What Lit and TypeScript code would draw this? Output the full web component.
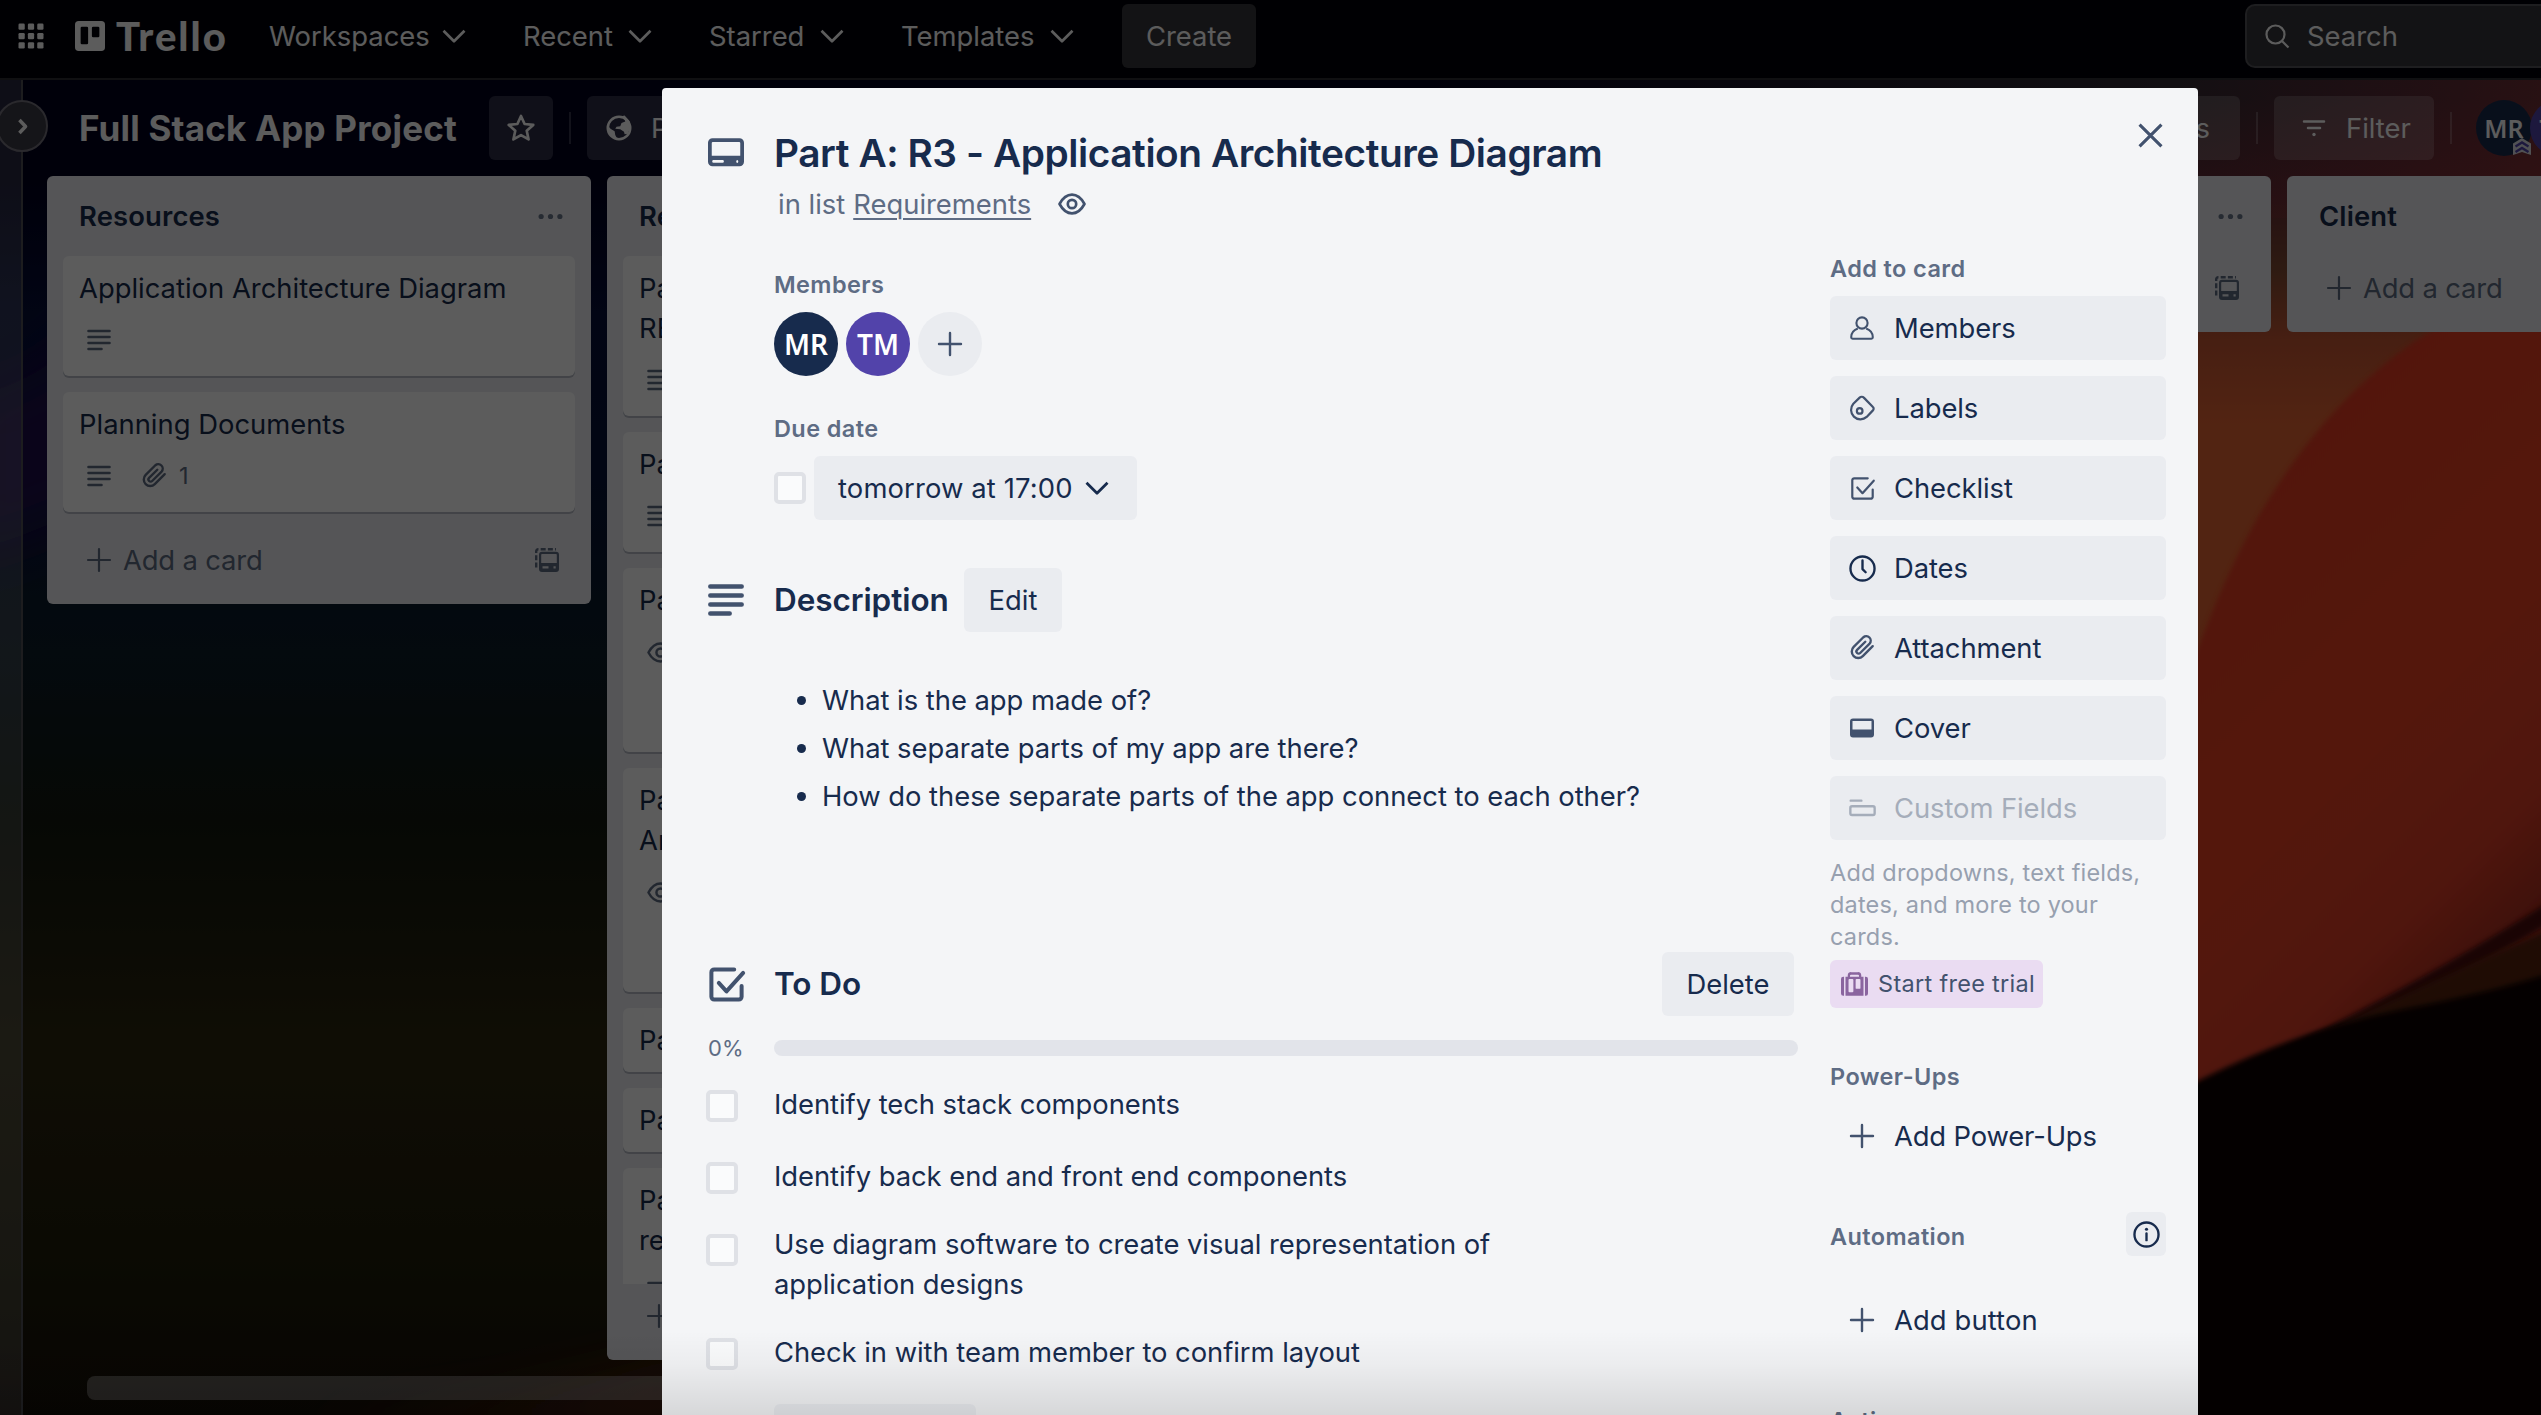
import { LitElement, html, svg, css, nothing } from "lit";
import { customElement, property } from "lit/decorators.js";

type IconName = string;

/** Icon artwork, all on a 24 x 24 grid. */
const ICONS: Record<IconName, unknown> = {
  apps: svg`${[2, 9.5, 17].map((y) => [2, 9.5, 17].map((x) => svg`<rect x=${x} y=${y} width="5" height="5" rx="1" fill="currentColor"/>`))}`,
  trello: svg`<path fill="currentColor" fill-rule="evenodd" d="M3 0h18a3 3 0 0 1 3 3v18a3 3 0 0 1-3 3H3a3 3 0 0 1-3-3V3a3 3 0 0 1 3-3Zm2.500 4.500a1 1 0 0 0-1 1v12a1 1 0 0 0 1 1h4a1 1 0 0 0 1-1v-12a1 1 0 0 0-1-1Zm9 0a1 1 0 0 0-1 1v6.500a1 1 0 0 0 1 1h4a1 1 0 0 0 1-1V5.500a1 1 0 0 0-1-1Z"/>`,
  chevron: svg`<path class="s" d="M3 7.500l9 9 9-9"/>`,
  expand: svg`<path class="s b" d="M8.500 4.500l7 7.500-7 7.500"/>`,
  star: svg`<path class="s" d="M12 3l2.700 6 6.500.7-4.900 4.400 1.400 6.500L12 17.300l-5.700 3.300 1.400-6.500-4.900-4.400 6.500-.7Z"/>`,
  globe: svg`<circle cx="12" cy="12" r="9" class="s"/><path fill="currentColor" d="M10 3.500l6 .3 1 3-3 1.200-1 2.500-3 .5-1 1.500 4 .5 3 2 .5 2 2.500-.5 2-5-.5-5-4-4.500ZM3.200 10l2 2.500 3.300 2 .5 3 1.800 3.500-4.500-2L3 14.500Z"/>`,
  search: svg`<circle cx="10.500" cy="10.500" r="9" class="s"/><path class="s" d="M17 17l6.500 6.500"/>`,
  filter: svg`<path class="s r" d="M2 5.500h20M6 12h12"/><circle cx="12" cy="18.500" r="1.700" fill="currentColor"/>`,
  dots: svg`<circle cx="3" cy="12" r="2.500" fill="currentColor"/><circle cx="12" cy="12" r="2.500" fill="currentColor"/><circle cx="21" cy="12" r="2.500" fill="currentColor"/>`,
  lines: svg`<path class="s r" d="M1.500 3h21M1.500 9h21M1.500 15h21M1.500 21h13"/>`,
  clip: svg`<g transform="translate(-1.800 -2.600) scale(1.140)"><path class="s r" d="M21.500 11.200l-8.700 8.700a5.600 5.600 0 0 1-8-8l8.500-8.500a3.900 3.900 0 0 1 5.500 5.500L10.500 17.200a1.900 1.900 0 0 1-2.700-2.700l7.200-7.200"/></g>`,
  plus: svg`<path class="s r" d="M12 1v22M1 12h22"/>`,
  template: svg`<path class="s" stroke-dasharray="5 2.200" stroke-width="2.400" d="M1.200 19.500V3.200A2 2 0 0 1 3.200 1.200H21"/><path fill="currentColor" fill-rule="evenodd" d="M7 3.800h14a3 3 0 0 1 3 3v14.200a3 3 0 0 1-3 3H7a3 3 0 0 1-3-3V6.800a3 3 0 0 1 3-3Zm0 2.200a.8.800 0 0 0-.8.800v8.200h15.600V6.800A.8.800 0 0 0 21 6Zm.500 12.300v2.200h6v-2.200Zm11 0v2.200h2.200v-2.200Z"/>`,
  eye: svg`<path class="s" d="M1.300 12C4 7 7.500 4 12 4s8 3 10.700 8C20 17 16.500 20 12 20S4 17 1.300 12Z"/><circle cx="12" cy="12" r="3.600" class="s"/>`,
  card: svg`<path fill="currentColor" fill-rule="evenodd" d="M3 2.800h18a3 3 0 0 1 3 3v12.700a3 3 0 0 1-3 3H3a3 3 0 0 1-3-3V5.800a3 3 0 0 1 3-3ZM3.200 5.300a.7.700 0 0 0-.7.700v8.500h19V6a.7.700 0 0 0-.7-.7Zm.5 12.100a.9.900 0 0 0 0 1.800h6a.9.900 0 0 0 0-1.800Zm15.800 0a1 1 0 0 0 0 1.900 1 1 0 0 0 0-1.900Z"/>`,
  close: svg`<path class="s" d="M1.500 1.500l21 21M22.500 1.500l-21 21"/>`,
  member: svg`<circle cx="12" cy="7" r="5.600" class="s"/><path class="s" d="M7.800 12.500C3.800 14 1.200 17.500 1.200 21.300c0 .9.500 1.400 1.400 1.400h18.800c.9 0 1.400-.5 1.400-1.400 0-3.800-2.600-7.300-6.600-8.800"/>`,
  label: svg`<path class="s" d="M13.500 1.800l8.500 8.800a2.200 2.200 0 0 1 0 3.200l-6 6.300a9 9 0 0 1-12.800-12.600l5.800-5.700a3.200 3.200 0 0 1 4.500 0Z"/><circle cx="9.300" cy="14.300" r="2.700" class="s"/>`,
  check: svg`<path class="s r" d="M17 2.200H4a1.800 1.800 0 0 0-1.800 1.800v16A1.800 1.800 0 0 0 4 21.800h16a1.800 1.800 0 0 0 1.800-1.800v-7"/><path class="s r" d="M7 11l5 5.500L22.800 4.500"/>`,
  clock: svg`<circle cx="12" cy="12" r="10.700" class="s"/><path class="s r" d="M12 4.800v7.700l2.800 2.800"/>`,
  cover: svg`<path fill="currentColor" fill-rule="evenodd" d="M3 2.500h18a3 3 0 0 1 3 3v13a3 3 0 0 1-3 3H3a3 3 0 0 1-3-3v-13a3 3 0 0 1 3-3Zm-.5 2.500v8.500h19V5Z"/>`,
  fields: svg`<path class="s r" d="M1.500 5h9.500"/><rect x="1.200" y="10" width="21.600" height="7.800" rx="1.500" class="s"/>`,
  bag: svg`<path fill="currentColor" fill-rule="evenodd" d="M6 3.500A3 3 0 0 1 9 1h6a3 3 0 0 1 3 2.500V5h2v17H4V5h2Zm2 .7V5h8v-.8a.9.900 0 0 0-.9-.9H8.900a.9.900 0 0 0-.9.900ZM6.700 8v10a.8.800 0 0 0 .8.800h2.700a.8.800 0 0 0 .8-.8V8a.8.800 0 0 0-.8-.8H7.500a.8.800 0 0 0-.8.800Zm6.300 0v7a.8.800 0 0 0 .8.800h2.700a.8.800 0 0 0 .8-.8V8a.8.800 0 0 0-.8-.8h-2.700a.8.800 0 0 0-.8.800ZM2.700 5v17H2a2 2 0 0 1-2-2V7a2 2 0 0 1 2-2Zm18.600 0H22a2 2 0 0 1 2 2v13a2 2 0 0 1-2 2h-.7Z"/>`,
  info: svg`<circle cx="12" cy="12" r="10.700" class="s"/><path class="s r" d="M12 11v6"/><circle cx="12" cy="7.300" r="1.400" fill="currentColor"/>`,
};

@customElement("ui-icon")
class UiIcon extends LitElement {
  @property() name = "";
  @property({ type: Number }) size = 24;
  @property({ type: Number }) weight = 2;
  static styles = css`
    :host { display: inline-flex; flex: none; }
    svg { display: block; overflow: visible; }
    .s { fill: none; stroke: currentColor; stroke-linejoin: round; }
    .r { stroke-linecap: round; }
  `;
  render() {
    return html`<svg viewBox="0 0 24 24" width=${this.size} height=${this.size} stroke-width=${this.weight}>${ICONS[this.name]}</svg>`;
  }
}

const icon = (name: IconName, size = 24, weight = 2) =>
  html`<ui-icon name=${name} .size=${size} .weight=${weight}></ui-icon>`;

interface Card { lines: string[]; badges?: string[]; tall?: boolean; files?: number; }

@customElement("board-list")
class BoardList extends LitElement {
  @property() heading = "";
  @property() action = "Add a card";
  @property({ attribute: false }) cards: Card[] = [];
  @property({ type: Boolean }) clipped = false;
  static styles = css`
    :host { display: block; flex: none; width: 544px; box-sizing: border-box; border-radius: 6px; background: #ebecf0; color: #172b4d; overflow: hidden; }
    .head { display: flex; align-items: center; justify-content: space-between; height: 80px; padding: 0 28px 0 32px; box-sizing: border-box; font-weight: 600; letter-spacing: .15px; }
    .dots, .tool { display: flex; color: #6b778c; }
    .body { display: flex; flex-direction: column; gap: 16px; padding: 0 16px 16px; }
    .body.empty { padding: 0; }
    .body.clipped { height: 1028px; box-sizing: border-box; padding-bottom: 0; overflow: hidden; }
    .card { flex: none; background: #fff; border-radius: 6px; box-shadow: 0 2px 0 #b7bbc6; padding: 12px 16px; line-height: 40px; }
    .card.tall { padding-bottom: 76px; }
    .badges { display: flex; align-items: center; gap: 31px; height: 40px; padding: 0 8px; margin: 12px 0 4px; color: #5e6c84; font-size: 23.500px; }
    .file { display: flex; align-items: center; gap: 13px; }
    .foot { display: flex; align-items: center; height: 64px; padding: 0 32px 12px 40px; color: #5e6c84; gap: 12px; letter-spacing: -.150px; }
    .foot .label { flex: 1; }
    .foot .tool { color: #5e6c84; }
  `;
  render() {
    return html`
      <div class="head"><span>${this.heading}</span><span class="dots">${icon("dots", 25)}</span></div>
      <div class="body ${this.clipped ? "clipped" : ""} ${this.cards.length ? "" : "empty"}">
        ${this.cards.map((c) => html`
          <div class="card ${c.tall ? "tall" : ""}">
            ${c.lines.map((l) => html`<div>${l}</div>`)}
            ${c.badges ? html`<div class="badges">
              ${c.badges.map((b) => icon(b, b === "eye" ? 27 : 24, b === "eye" ? 2.2 : 2.6))}
              ${c.files ? html`<span class="file">${icon("clip", 24, 2.1)}<span>${c.files}</span></span>` : nothing}
            </div>` : nothing}
          </div>`)}
      </div>
      <div class="foot">${icon("plus", 24, 2.2)}<span class="label">${this.action}</span><span class="tool">${icon("template", 24, 2)}</span></div>`;
  }
}

const NAV = [
  { label: "Workspaces", size: "w1" },
  { label: "Recent", size: "w2" },
  { label: "Starred", size: "w3" },
  { label: "Templates", size: "w4" },
];

@customElement("top-nav")
class TopNav extends LitElement {
  static styles = css`
    :host { display: flex; align-items: center; height: 80px; box-sizing: border-box; padding: 4px 0 10px 16px; background: #02020a; border-bottom: 2px solid #2e2e33; color: #fff; overflow: hidden; }
    .brand { display: flex; align-items: center; gap: 11px; flex: none; margin-left: 29px; width: 194px; font: 900 40px/44px Lato, sans-serif; letter-spacing: 2px; }
    .item { display: flex; align-items: center; justify-content: space-between; flex: none; margin-right: 58px; }
    .w1 { width: 199px; margin-right: 55px; } .w2 { width: 131px; margin-right: 55px; } .w3 { width: 137px; margin-right: 55px; } .w4 { width: 175px; }
    .w4 { margin-right: 46px; }
    .create { display: flex; align-items: center; justify-content: center; width: 134px; height: 64px; border-radius: 6px; background: #36363a; }
    .grow { flex: 1; }
    .search { display: flex; align-items: center; gap: 18px; width: 296px; height: 64px; box-sizing: border-box; padding-left: 18px; border: 2px solid #55555a; border-right: 0; border-radius: 10px 0 0 10px; background: #36363a; flex: none; }
  `;
  render() {
    return html`
      ${icon("apps", 30)}
      <div class="brand">${icon("trello", 30)}<span>Trello</span></div>
      ${NAV.map((n) => html`<div class="item ${n.size}"><span>${n.label}</span>${icon("chevron", 28, 2.3)}</div>`)}
      <div class="create">Create</div>
      <div class="grow"></div>
      <div class="search">${icon("search", 24, 2.200)}<span>Search</span></div>`;
  }
}

const ACTIONS = [
  { icon: "member", label: "Members", size: 24 },
  { icon: "label", label: "Labels", size: 25 },
  { icon: "check", label: "Checklist", size: 25 },
  { icon: "clock", label: "Dates", size: 27, strong: true },
  { icon: "clip", label: "Attachment", size: 24 },
  { icon: "cover", label: "Cover", size: 24 },
  { icon: "fields", label: "Custom Fields", size: 27, off: true },
];

const TODO = [
  ["Identify tech stack components"],
  ["Identify back end and front end components"],
  ["Use diagram software to create visual representation of", "application designs"],
  ["Check in with team member to confirm layout"],
];

@customElement("card-dialog")
class CardDialog extends LitElement {
  static styles = css`
    :host { display: block; box-sizing: border-box; background: #f4f5f7; border-radius: 4px 4px 0 0; color: #172b4d; overflow: hidden; padding: 44px 32px 0 46px; }
    .top { display: flex; align-items: flex-start; }
    .top > .lead { width: 66px; height: 40px; display: flex; align-items: center; color: #42526e; }
    .title { font-size: 38.800px; line-height: 42px; font-weight: 600; white-space: nowrap; letter-spacing: -.430px; }
    .sub { display: flex; align-items: center; height: 40px; margin: 10px 0 0 4px; color: #5e6c84; }
    .sub u { margin-left: 8px; text-underline-offset: 4px; text-decoration-thickness: 2px; }
    .sub ui-icon { margin-left: 27px; color: #42526e; }
    .spacer { flex: 1; }
    .x { display: flex; color: #42526e; margin: -9px 3px 0 0; }
    .cols { display: flex; justify-content: space-between; }
    .main { width: 1090px; display: flex; flex-direction: column; padding-top: 48px; }
    .side { width: 336px; display: flex; flex-direction: column; padding-top: 32px; }
    .small { font-size: 23.500px; line-height: 26px; height: 24px; font-weight: 600; color: #5e6c84; letter-spacing: .400px; }
    .indent { margin-left: 66px; }
    .people { display: flex; gap: 8px; margin: 16px 0 40px 66px; }
    .avatar { display: flex; align-items: center; justify-content: center; width: 64px; height: 64px; border-radius: 50%; background: #172b4d; color: #fff; font: 600 28px/64px "Noto Sans", sans-serif; }
    .avatar.tm { background: #5243aa; }
    .avatar.add { background: #eaecf0; color: #42526e; height: 64px; }
    .due { display: flex; align-items: center; gap: 8px; margin: 16px 0 48px 66px; }
    .box { flex: none; width: 32px; height: 32px; box-sizing: border-box; border: 4px solid #dfe1e6; border-radius: 5px; background: #fafbfc; }
    .btn { display: flex; align-items: center; height: 64px; border-radius: 6px; background: #eaecf0; box-sizing: border-box; }
    .date { width: 323px; padding: 0 26px 0 24px; justify-content: space-between; white-space: nowrap; letter-spacing: .130px; }
    .section { display: flex; align-items: center; height: 64px; }
    .section > .lead { width: 66px; display: flex; color: #42526e; }
    h3 { margin: 0; font-size: 31.500px; line-height: 40px; font-weight: 600; letter-spacing: -.080px; }
    .edit { width: 98px; justify-content: center; margin-left: 16px; }
    .desc-title { width: 174px; white-space: nowrap; }
    .delete { width: 132px; justify-content: center; margin-right: 4px; }
    ul { list-style: none; margin: 44px 0 132px; padding: 0 0 0 89px; }
    li { display: flex; align-items: center; gap: 16px; height: 48px; white-space: nowrap; letter-spacing: -.030px; }
    li::before { content: ""; width: 9px; height: 9px; border-radius: 50%; background: #172b4d; }
    .progress { display: flex; align-items: center; height: 16px; margin: 24px 0 18px; }
    .pct { width: 66px; font-size: 22px; color: #5e6c84; box-sizing: border-box; }
    .bar { flex: 1; height: 16px; border-radius: 8px; background: #e2e4ea; }
    .item { display: flex; gap: 36px; box-sizing: border-box; height: 72px; padding-top: 10px; line-height: 40px; white-space: nowrap; letter-spacing: -.050px; }
    .item .box { margin: 6px 0 0 -2px; }
    .item.two { height: 104px; padding-top: 6px; }
    .item.two .box { margin-top: 10px; }
    .additem { margin: 10px 0 0 66px; width: 202px; height: 64px; border-radius: 6px; background: #eaecf0; }
    .stack { display: flex; flex-direction: column; gap: 16px; margin-top: 16px; }
    .row { letter-spacing: -.080px; }
    .row .ic, .plain .ic { width: 64px; display: flex; justify-content: center; color: #42526e; }
    .row .ic.strong { color: #172b4d; }
    .row.off, .row.off .ic { color: #a5adba; }
    .help { font-size: 23.500px; line-height: 32px; margin-top: 17px; height: 95px; color: #97a0af; white-space: nowrap; letter-spacing: .180px; }
    .trial { display: flex; align-items: center; gap: 10px; margin-top: 8px; width: 213px; height: 48px; box-sizing: border-box; padding-left: 11px; border-radius: 6px; background: #eadcf2; color: #42526e; font-size: 23.500px; letter-spacing: .300px; white-space: nowrap; }
    .trial ui-icon { color: #8a659f; }
    .plain { display: flex; align-items: center; height: 64px; margin-top: 16px; white-space: nowrap; letter-spacing: -.150px; }
    .power { margin-top: 56px; }
    .auto { display: flex; justify-content: space-between; align-items: flex-start; margin-top: 44px; height: 44px; }
    .auto .small { margin-top: 12px; }
    .info { display: flex; align-items: center; justify-content: center; width: 40px; height: 44px; border-radius: 6px; background: #eaecf0; }
    .button { margin-top: 32px; letter-spacing: .1px; }
    .actions { margin-top: 56px; }
  `;
  render() {
    return html`
      <div class="top">
        <div class="lead">${icon("card", 36)}</div>
        <div>
          <div class="title">Part A: R3 - Application Architecture Diagram</div>
          <div class="sub"><span>in list</span><u>Requirements</u>${icon("eye", 28, 2.3)}</div>
        </div>
        <div class="spacer"></div>
        <div class="x">${icon("close", 25, 3)}</div>
      </div>
      <div class="cols">
        <div class="main">
          <div class="small indent">Members</div>
          <div class="people">
            <div class="avatar">MR</div>
            <div class="avatar tm">TM</div>
            <div class="avatar add">${icon("plus", 24, 2.4)}</div>
          </div>
          <div class="small indent">Due date</div>
          <div class="due">
            <div class="box"></div>
            <div class="btn date"><span>tomorrow at 17:00</span>${icon("chevron", 28, 2.4)}</div>
          </div>
          <div class="section">
            <div class="lead">${icon("lines", 36, 2.9)}</div>
            <h3 class="desc-title">Description</h3>
            <div class="btn edit">Edit</div>
          </div>
          <ul>
            <li>What is the app made of?</li>
            <li>What separate parts of my app are there?</li>
            <li>How do these separate parts of the app connect to each other?</li>
          </ul>
          <div class="section">
            <div class="lead">${icon("check", 37, 2.6)}</div>
            <h3>To Do</h3>
            <div class="spacer"></div>
            <div class="btn delete">Delete</div>
          </div>
          <div class="progress"><div class="pct">0%</div><div class="bar"></div></div>
          ${TODO.map((t) => html`<div class="item ${t.length > 1 ? "two" : ""}"><div class="box"></div><div>${t.map((l) => html`<div>${l}</div>`)}</div></div>`)}
          <div class="additem"></div>
        </div>
        <div class="side">
          <div class="small">Add to card</div>
          <div class="stack">
            ${ACTIONS.map((a) => html`<div class="btn row ${a.off ? "off" : ""}"><span class="ic ${a.strong ? "strong" : ""}">${icon(a.icon, a.size, 2.1)}</span><span>${a.label}</span></div>`)}
          </div>
          <div class="help">Add dropdowns, text fields,<br />dates, and more to your<br />cards.</div>
          <div class="trial">${icon("bag", 27)}<span>Start free trial</span></div>
          <div class="small power">Power-Ups</div>
          <div class="plain"><span class="ic">${icon("plus", 24, 2.4)}</span>Add Power-Ups</div>
          <div class="auto"><div class="small">Automation</div><div class="info">${icon("info", 27, 2.1)}</div></div>
          <div class="plain button"><span class="ic">${icon("plus", 24, 2.4)}</span>Add button</div>
          <div class="small actions">Actions</div>
        </div>
      </div>`;
  }
}

const RESOURCES: Card[] = [
  { lines: ["Application Architecture Diagram"], badges: ["lines"] },
  { lines: ["Planning Documents"], badges: ["lines"], files: 1 },
];
const REQUIREMENTS: Card[] = [
  { lines: ["Pa", "RE"], badges: ["lines"] },
  { lines: ["Pa"], badges: ["lines"] },
  { lines: ["Pa"], badges: ["eye"], tall: true },
  { lines: ["Pa", "Ar"], badges: ["eye"], tall: true },
  { lines: ["Pa"] },
  { lines: ["Pa"] },
  { lines: ["Pa", "re"], badges: ["lines"] },
];

@customElement("app-root")
class AppRoot extends LitElement {
  static styles = css`
    :host { display: block; position: relative; width: 2541px; height: 1415px; overflow: hidden; font: 400 27.400px/40px Inter, "Liberation Sans", sans-serif; background: #000; }
    .wall { position: absolute; inset: 0; }
    .page { position: relative; display: flex; flex-direction: column; height: 1415px; }
    .work { flex: 1; display: flex; min-height: 0; }
    .rail { position: relative; flex: none; width: 23px; box-sizing: border-box; background: rgba(255, 255, 255, .16); border-right: 2px solid #505058; }
    .toggle { position: absolute; left: -4px; top: 20px; width: 52px; height: 52px; box-sizing: border-box; border: 2px solid #75737e; border-radius: 50%; background: #3b3a45; color: #fff; display: flex; align-items: center; justify-content: center; }
    .board { flex: 1; min-width: 0; display: flex; flex-direction: column; overflow: hidden; }
    .bar { display: flex; align-items: center; height: 96px; padding-left: 56px; color: #fff; flex: none; }
    .name { font-size: 35px; font-weight: 700; width: 410px; white-space: nowrap; letter-spacing: .200px; }
    .chip { display: flex; align-items: center; height: 64px; border-radius: 6px; background: rgba(255, 255, 255, .18); box-sizing: border-box; flex: none; }
    .star { width: 64px; justify-content: center; }
    .rule { width: 2px; height: 32px; background: rgba(255, 255, 255, .2); margin: 0 16px; flex: none; }
    .vis { width: 160px; padding-left: 17px; gap: 17px; }
    .gap { flex: 1; }
    .ups { width: 160px; justify-content: flex-end; padding-right: 30px; }
    .filter { width: 160px; padding-left: 28px; gap: 20px; }
    .faces { display: flex; width: 65px; flex: none; margin-left: 8px; }
    .face { position: relative; flex: none; width: 56px; height: 56px; border-radius: 50%; background: #172b4d; font: 600 25px/56px "Noto Sans", sans-serif; text-align: center; margin-right: -2px; }
    .face.tm { background: #5243aa; }
    .rank { position: absolute; right: 1px; bottom: 1px; display: block; }
    .lists { display: flex; align-items: flex-start; gap: 16px; padding-left: 24px; flex: 1; }
    .hidden-list { flex: none; width: 544px; }
    .scroll { flex: none; height: 24px; width: 2000px; border-radius: 8px; margin: 0 0 15px 64px; background: rgba(255, 255, 255, .32); }
    .shade { position: absolute; inset: 0; background: rgba(0, 0, 0, .64); }
    .dialog { position: absolute; left: 662px; top: 88px; width: 1536px; height: 1327px; }
    .fade { position: absolute; left: 0; right: 0; bottom: 0; height: 84px; background: linear-gradient(rgba(0, 0, 0, 0), rgba(0, 0, 0, .035) 40%, rgba(0, 0, 0, .12)); }
  `;
  render() {
    return html`
      <svg class="wall" width="2541" height="1415" viewBox="0 0 2541 1415">
        <defs>
          <linearGradient id="left" x1="0" y1="0" x2="0" y2="1">
            <stop offset="0" stop-color="#00001c" /><stop offset=".13" stop-color="#00001e" />
            <stop offset=".22" stop-color="#060e38" /><stop offset=".33" stop-color="#071236" />
            <stop offset=".46" stop-color="#0c1c28" /><stop offset=".58" stop-color="#12180f" />
            <stop offset=".74" stop-color="#2c2610" /><stop offset=".9" stop-color="#1e1c0a" />
            <stop offset="1" stop-color="#160e08" />
          </linearGradient>
          <linearGradient id="right" x1="0" y1="0" x2="0" y2="1">
            <stop offset="0" stop-color="#302c38" /><stop offset=".07" stop-color="#382a34" />
            <stop offset=".14" stop-color="#642c35" /><stop offset=".19" stop-color="#804a32" />
            <stop offset=".24" stop-color="#c45632" />
            <stop offset=".3" stop-color="#e46432" /><stop offset="1" stop-color="#e46432" />
          </linearGradient>
          <linearGradient id="fadein" x1="0" y1="0" x2="1" y2="0">
            <stop offset="0" stop-color="#00001c" /><stop offset="1" stop-color="#342b36" />
          </linearGradient>
          <linearGradient id="topred" x1="0" y1="0" x2="1" y2="0">
            <stop offset="0" stop-color="#a02c38" stop-opacity="0" /><stop offset="1" stop-color="#a83438" stop-opacity=".5" />
          </linearGradient>
          <linearGradient id="red" x1="0" y1="0" x2=".5" y2="1">
            <stop offset="0" stop-color="#d43626" /><stop offset=".3" stop-color="#e43a24" />
            <stop offset=".65" stop-color="#e94324" /><stop offset=".85" stop-color="#dc3c26" />
            <stop offset="1" stop-color="#98281c" />
          </linearGradient>
          <filter id="soft" x="-50%" y="-50%" width="200%" height="200%"><feGaussianBlur stdDeviation="26" /></filter>
          <filter id="edge" x="-10%" y="-10%" width="120%" height="120%"><feGaussianBlur stdDeviation="2.500" /></filter>
        </defs>
        <rect width="2541" height="1415" fill="url(#left)" />
        <path d="M-40 400Q60 380 110 300V500Q60 520 -40 560Z" fill="#1c0a48" filter="url(#soft)" />
        <path d="M300 1430Q520 1410 700 1350V1430Z" fill="#4c200e" filter="url(#soft)" />
        <rect x="1400" y="78" width="780" height="12" fill="url(#fadein)" />
        <rect x="2180" width="361" height="1415" fill="url(#right)" />
        <rect x="2180" y="78" width="361" height="140" fill="url(#topred)" />
        <path d="M2560 270Q2440 315 2380 368Q2270 460 2205 630L2100 900V1160L2560 960Z" fill="url(#red)" filter="url(#edge)" />
        <path d="M2560 895Q2420 985 2230 1075Q2420 1005 2560 916Z" fill="#480c10" filter="url(#edge)" />
        <path d="M2560 925Q2420 985 2290 1050L2560 985Z" fill="#58200c" filter="url(#edge)" />
        <path d="M2100 1132L2198 1081Q2298 1030 2400 1010T2560 970V1440H2100Z" fill="#070302" filter="url(#edge)" />
      </svg>
      <div class="page">
        <top-nav></top-nav>
        <div class="work">
          <div class="rail"><div class="toggle">${icon("expand", 21, 4)}</div></div>
          <div class="board">
            <div class="bar">
              <div class="name">Full Stack App Project</div>
              <div class="chip star">${icon("star", 32, 2)}</div>
              <div class="rule"></div>
              <div class="chip vis">${icon("globe", 30, 2)}<span>P</span></div>
              <div class="gap"></div>
              <div class="chip ups">s</div>
              <div class="rule"></div>
              <div class="chip filter">${icon("filter", 24, 2.5)}<span>Filter</span></div>
              <div class="rule"></div>
              <div class="faces">
                <div class="face">MR
                  <svg class="rank" width="18" height="17" viewBox="0 0 18 17">
                    <path d="M0 5.500L9 0l9 5.500V17l-9-3-9 3Z" fill="#dfe1e6" />
                    <path d="M2.500 8.500L9 4.500l6.500 4M2.500 14L9 10l6.500 4" fill="none" stroke="#5243aa" stroke-width="2.400" />
                  </svg>
                </div>
                <div class="face tm">TM</div>
              </div>
            </div>
            <div class="lists">
              <board-list heading="Resources" .cards=${RESOURCES}></board-list>
              <board-list heading="Re" action="" .cards=${REQUIREMENTS} clipped></board-list>
              <div class="hidden-list"></div>
              <board-list action=""></board-list>
              <board-list heading="Client"></board-list>
            </div>
            <div class="scroll"></div>
          </div>
        </div>
      </div>
      <div class="shade"></div>
      <card-dialog class="dialog"></card-dialog>
      <div class="fade"></div>`;
  }
}
